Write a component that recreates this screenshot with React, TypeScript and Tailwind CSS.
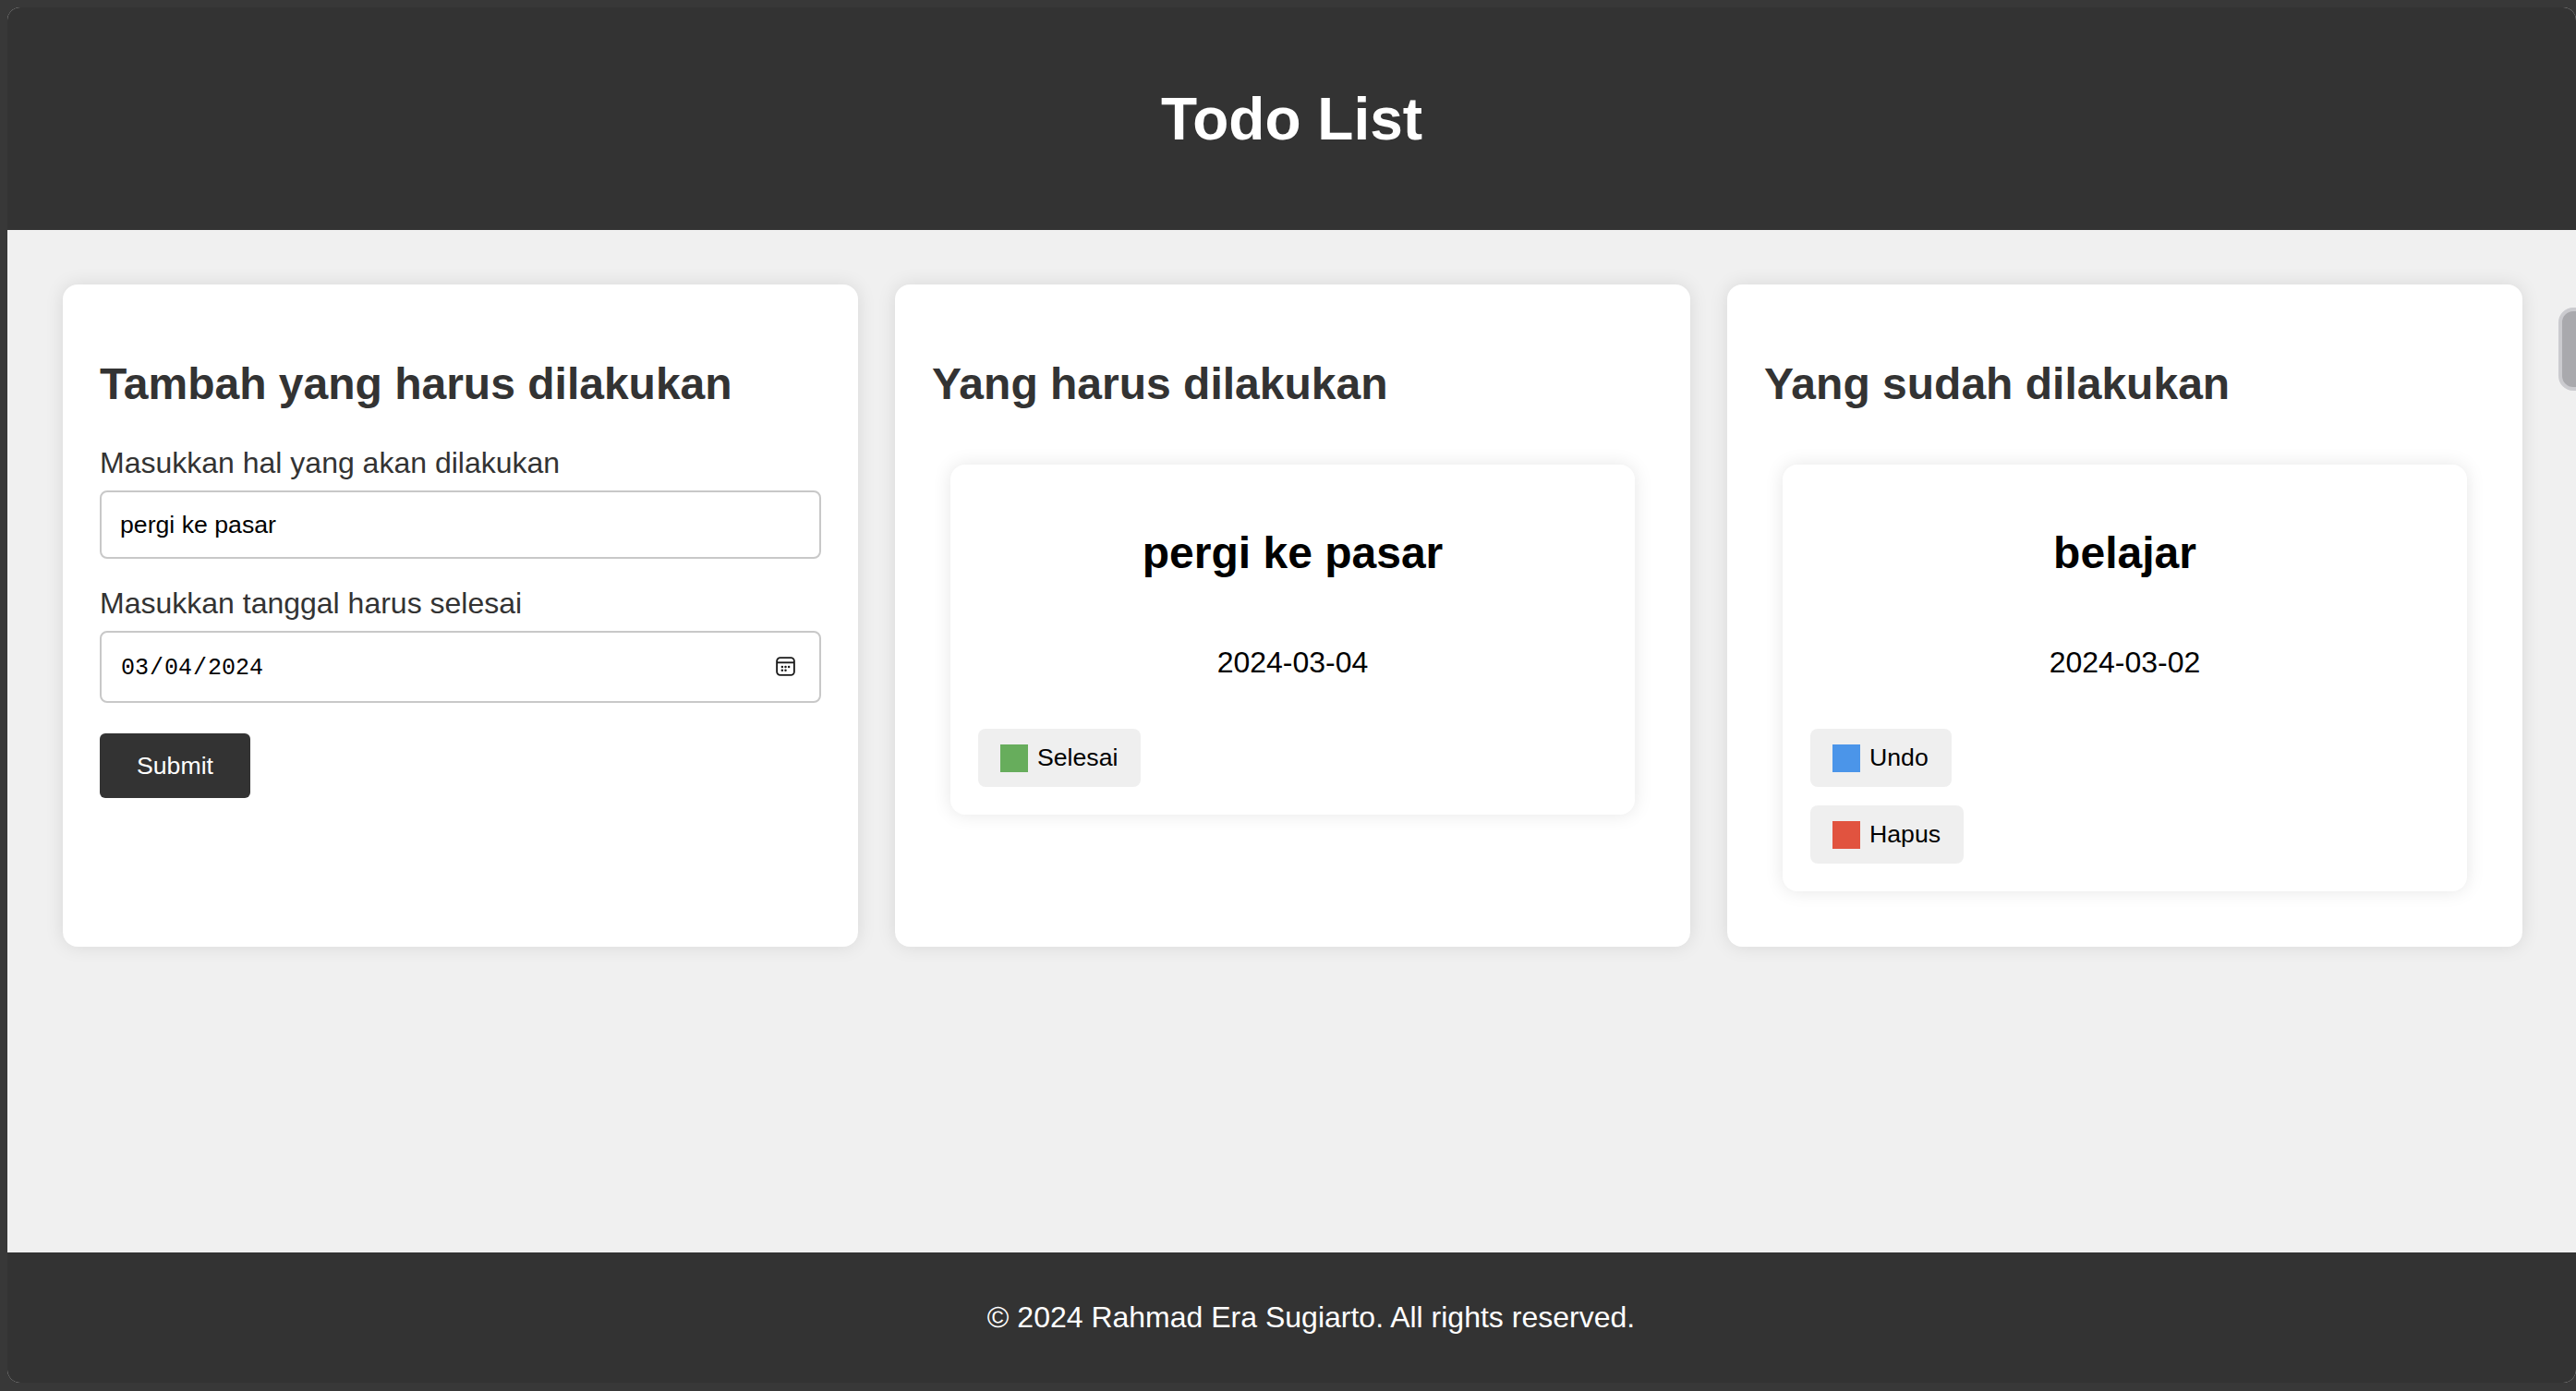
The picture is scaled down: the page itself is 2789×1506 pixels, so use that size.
import React from 'react';

type Todo = { id: number; title: string; date: string };

const todos: Todo[] = [{ id: 1, title: 'pergi ke pasar', date: '2024-03-04' }];
const done: Todo[] = [{ id: 2, title: 'belajar', date: '2024-03-02' }];

// small flat square, same look as the emoji in the buttons
const Square = ({ color }: { color: string }) => (
  <span className={`mr-[10px] inline-block h-[30px] w-[30px] ${color}`} />
);

const ActionButton = ({ color, label }: { color: string; label: string }) => (
  <button
    type="button"
    className="flex items-center rounded-[8px] bg-[#efefef] py-[16px] pl-[24px] pr-[25px] text-[26.67px] leading-[31px] text-black"
  >
    <Square color={color} />
    {label}
  </button>
);

const CalendarIcon = () => (
  <svg width="25" height="25" viewBox="0 0 24 24" fill="none" stroke="#1a1a1a" strokeWidth="1.8">
    <rect x="3" y="3" width="18" height="18" rx="3.5" />
    <line x1="3" y1="8" x2="21" y2="8" />
    <g fill="#1a1a1a" stroke="none">
      <circle cx="8.5" cy="12.5" r="1.2" />
      <circle cx="12" cy="12.5" r="1.2" />
      <circle cx="15.5" cy="12.5" r="1.2" />
      <circle cx="8.5" cy="16" r="1.2" />
      <circle cx="12" cy="16" r="1.2" />
    </g>
  </svg>
);

const TodoItem = ({ todo, isDone }: { todo: Todo; isDone: boolean }) => (
  <div className="mx-[20px] mt-[20px] mb-[20px] rounded-[16px] bg-white p-[30px] shadow-[0_0_20px_rgba(0,0,0,0.1)]">
    <h2 className="mt-[38px] text-center text-[48px] font-bold leading-[55px] text-black">{todo.title}</h2>
    <p className="mt-[73px] text-center text-[32px] leading-[37px] text-black">{todo.date}</p>
    <div className="mt-[53px] flex flex-col items-start gap-[20px]">
      {isDone ? (
        <>
          <ActionButton color="bg-[#4b95e9]" label="Undo" />
          <ActionButton color="bg-[#e1533f]" label="Hapus" />
        </>
      ) : (
        <ActionButton color="bg-[#67ad5c]" label="Selesai" />
      )}
    </div>
  </div>
);

const Card = ({ title, children }: { title: string; children: React.ReactNode }) => (
  <section className="flex flex-col rounded-[16px] bg-white px-[40px] pt-[40px] pb-[40px] shadow-[0_0_20px_rgba(0,0,0,0.1)]">
    <h2 className="mt-[40px] mb-[40px] text-[48px] font-bold leading-[55px] text-[#333333]">{title}</h2>
    {children}
  </section>
);

export default function App() {
  return (
    <div className="relative h-[1506px] w-[2789px] overflow-hidden bg-[#383838] pl-[8px] pt-[8px] font-['Liberation_Sans',Arial,sans-serif]">
      <div className="flex h-[1489px] flex-col overflow-hidden rounded-[14px] bg-[#f0f0f0]">
        {/* Header */}
        <header className="flex h-[241px] shrink-0 items-center justify-center bg-[#333333]">
          <h1 className="text-[64px] font-bold leading-[74px] text-white">Todo List</h1>
        </header>

        {/* Columns */}
        <main className="flex-1 pt-[59px] pl-[60px] pr-[58px]">
          <div className="grid grid-cols-3 items-stretch gap-x-[40px]">
            <Card title="Tambah yang harus dilakukan">
              <form onSubmit={(e) => e.preventDefault()}>
                <label className="mb-[11px] block text-[32px] leading-[37px] text-[#333333]">
                  Masukkan hal yang akan dilakukan
                </label>
                <input
                  type="text"
                  defaultValue="pergi ke pasar"
                  className="mb-[30px] block h-[74px] w-full rounded-[8px] border-2 border-[#c8c8c8] bg-white px-[20px] text-[26.67px] leading-[30px] text-black outline-none"
                />
                <label className="mb-[11px] block text-[32px] leading-[37px] text-[#333333]">
                  Masukkan tanggal harus selesai
                </label>
                <div className="relative">
                  <input
                    type="date"
                    defaultValue="2024-03-04"
                    className="block h-[78px] w-full rounded-[8px] border-2 border-[#c8c8c8] bg-white px-[20px] pt-[3px] font-['Liberation_Mono',monospace] text-[25px] text-black outline-none [&::-webkit-calendar-picker-indicator]:opacity-0"
                  />
                  <span className="pointer-events-none absolute right-[26px] top-[26px]">
                    <CalendarIcon />
                  </span>
                </div>
                <button
                  type="submit"
                  className="mt-[33px] rounded-[6px] bg-[#333333] px-[40px] py-[20px] text-[26.67px] leading-[30px] text-white"
                >
                  Submit
                </button>
              </form>
            </Card>

            <Card title="Yang harus dilakukan">
              {todos.map((t) => (
                <TodoItem key={t.id} todo={t} isDone={false} />
              ))}
            </Card>

            <Card title="Yang sudah dilakukan">
              {done.map((t) => (
                <TodoItem key={t.id} todo={t} isDone />
              ))}
            </Card>
          </div>
        </main>

        {/* Footer */}
        <footer className="flex h-[141px] shrink-0 items-center justify-center bg-[#333333] pl-[42px]">
          <p className="text-[32px] leading-[37px] text-white">© 2024 Rahmad Era Sugiarto. All rights reserved.</p>
        </footer>
      </div>

      {/* floating side handle at the right edge */}
      <div className="absolute left-[2770px] top-[333px] h-[90px] w-[40px] rounded-[16px] border-[4px] border-[#cbcbcf] bg-[#a9a9ad]" />
    </div>
  );
}
